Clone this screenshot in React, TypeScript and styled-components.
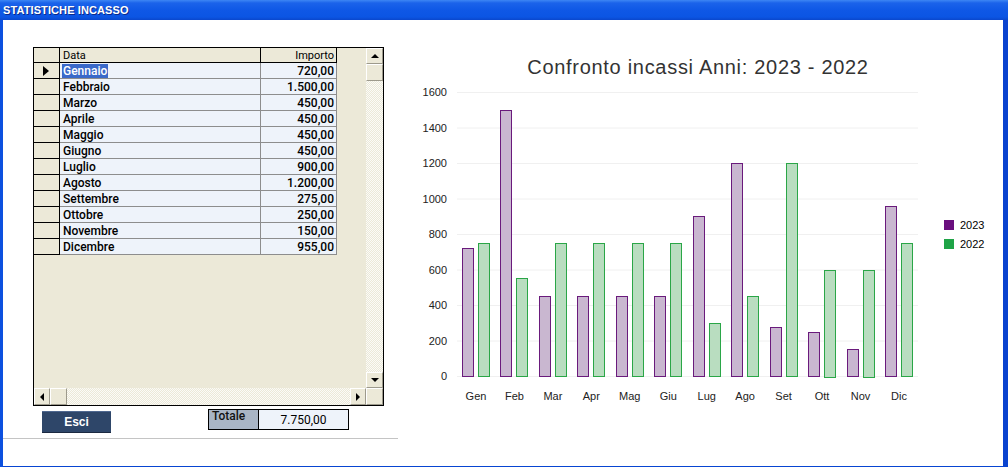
import styled, { createGlobalStyle, css } from "styled-components";

const GlobalStyle = createGlobalStyle`
  html, body { margin: 0; padding: 0; background: #fff; }
  body { font-family: "Liberation Sans", Arial, sans-serif; }
`;

const Window = styled.div`
  width: 1008px;
  height: 467px;
  display: flex;
  flex-direction: column;
  background: #fff;
  overflow: hidden;
`;

const TitleBar = styled.div`
  height: 20px;
  flex: none;
  padding-left: 3px;
  display: flex;
  align-items: center;
  color: #fff;
  font-size: 11px;
  font-weight: 700;
  letter-spacing: 0.1px;
  text-shadow: 1px 1px 0 #0b2a8a;
  background: linear-gradient(to bottom, #3d86f4 0%, #1b63ea 15%, #0f58e6 50%, #0b55e3 85%, #0a47cc 100%);
`;

const Frame = styled.div`
  flex: 1;
  display: flex;
  border-left: 3px solid #0c50df;
  border-right: 5px solid #0a43cf;
  border-bottom: 5px solid #0845d2;
`;

const LeftPanel = styled.div`
  width: 397px;
  flex: none;
  display: flex;
  flex-direction: column;
  padding-top: 27px;
  box-sizing: border-box;
`;

const GridBox = styled.div`
  margin-left: 30px;
  width: 351px;
  height: 359px;
  box-sizing: border-box;
  border: 1px solid #000;
  background: #ece9d8;
  display: flex;
  flex-direction: column;
`;

const GridTop = styled.div`
  flex: 1;
  display: flex;
`;

const GridBottom = styled.div`
  height: 17px;
  display: flex;
`;

const TableArea = styled.div`
  flex: 1;
  display: grid;
  grid-template-columns: 26px 201px 76px;
  grid-template-rows: 15px;
  grid-auto-rows: 16px;
  align-content: start;
`;

const Cell = styled.div<{ $head?: boolean; $ind?: boolean; $right?: boolean; $last?: boolean }>`
  box-sizing: border-box;
  display: flex;
  align-items: center;
  padding: 0 2px 0 3px;
  font-family: Roboto, "Liberation Sans", Arial, sans-serif;
  font-size: 12px;
  font-weight: 500;
  color: #000;
  white-space: nowrap;
  background: #eef3fa;
  border-right: 1px solid #8d8d8d;
  border-bottom: 1px solid #8d8d8d;
  ${(p) => p.$right && css`justify-content: flex-end;`}
  ${(p) =>
    (p.$head || p.$ind) &&
    css`
      background: #ece9d8;
      border-right-color: #000;
      border-bottom-color: #000;
    `}
  ${(p) =>
    p.$head &&
    css`
      font-size: 11px;
      font-weight: 400;
    `}
  ${(p) => p.$ind && css`justify-content: center; padding: 0;`}
  ${(p) => p.$last && css`border-right-color: #000;`}
`;

const Row = styled.div`
  display: contents;
`;

const Pointer = styled.span`
  width: 0;
  height: 0;
  margin-left: -2px;
  border-left: 6px solid #000;
  border-top: 5px solid transparent;
  border-bottom: 5px solid transparent;
`;

const Selected = styled.span`
  background: #3a69c9;
  color: #fff;
  padding: 0 1px;
  margin-left: -1px;
  line-height: 14px;
`;

const Track = styled.div<{ $vertical?: boolean }>`
  ${(p) => (p.$vertical ? css`width: 17px; flex-direction: column;` : css`flex: 1;`)}
  display: flex;
  background: repeating-conic-gradient(#ece9d8 0% 25%, #fbfbf8 0% 50%) 0 0 / 2px 2px;
`;

const ScrollBtn = styled.div<{ $w?: number; $h?: number }>`
  width: ${(p) => p.$w ?? 17}px;
  height: ${(p) => p.$h ?? 16}px;
  flex: none;
  box-sizing: border-box;
  background: #ece9d8;
  border-top: 1px solid #fff;
  border-left: 1px solid #fff;
  border-right: 1px solid #9d9a8c;
  border-bottom: 1px solid #9d9a8c;
  display: flex;
  align-items: center;
  justify-content: center;
`;

const Spacer = styled.div`
  flex: 1;
`;

const Arrow = styled.span<{ $dir: "up" | "down" | "left" | "right" }>`
  width: 0;
  height: 0;
  ${(p) =>
    p.$dir === "up"
      ? css`border-bottom: 4px solid #000; border-left: 4px solid transparent; border-right: 4px solid transparent;`
      : p.$dir === "down"
      ? css`border-top: 4px solid #000; border-left: 4px solid transparent; border-right: 4px solid transparent;`
      : p.$dir === "left"
      ? css`border-right: 4px solid #000; border-top: 4px solid transparent; border-bottom: 4px solid transparent;`
      : css`border-left: 4px solid #000; border-top: 4px solid transparent; border-bottom: 4px solid transparent;`}
`;

const Footer = styled.div`
  display: flex;
  align-items: flex-start;
  padding-left: 39px;
  margin-top: 3px;
  height: 24px;
`;

const ExitButton = styled.button`
  margin-top: 2px;
  width: 69px;
  height: 22px;
  border: 0;
  border-top: 1px solid #4f6890;
  border-bottom: 1px solid #1b2940;
  background: #2e4669;
  color: #fff;
  font-family: "Liberation Sans", Arial, sans-serif;
  font-size: 12px;
  font-weight: 700;
  cursor: pointer;
`;

const TotalBox = styled.div`
  margin-left: 97px;
  width: 141px;
  height: 21px;
  box-sizing: border-box;
  border: 1px solid #000;
  display: flex;
`;

const TotalLabel = styled.div`
  width: 50px;
  box-sizing: border-box;
  border-right: 1px solid #000;
  background: #a9b5c5;
  font-family: Roboto, "Liberation Sans", Arial, sans-serif;
  font-size: 12px;
  font-weight: 500;
  color: #111;
  padding: 0 0 0 3px;
  line-height: 13px;
`;

const TotalValue = styled.div`
  flex: 1;
  background: #eef3fa;
  display: flex;
  align-items: center;
  justify-content: center;
  font-family: Roboto, "Liberation Sans", Arial, sans-serif;
  font-size: 12px;
  color: #000;
`;

const Rule = styled.div`
  margin-top: 5px;
  margin-right: 2px;
  border-top: 1px solid #c4c4c4;
`;

const ChartPanel = styled.div`
  flex: 1;
`;

const months: [string, string][] = [
  ["Gennaio", "720,00"],
  ["Febbraio", "1.500,00"],
  ["Marzo", "450,00"],
  ["Aprile", "450,00"],
  ["Maggio", "450,00"],
  ["Giugno", "450,00"],
  ["Luglio", "900,00"],
  ["Agosto", "1.200,00"],
  ["Settembre", "275,00"],
  ["Ottobre", "250,00"],
  ["Novembre", "150,00"],
  ["Dicembre", "955,00"],
];

const labels = ["Gen", "Feb", "Mar", "Apr", "Mag", "Giu", "Lug", "Ago", "Set", "Ott", "Nov", "Dic"];
const y2023 = [720, 1500, 450, 450, 450, 450, 900, 1200, 275, 250, 150, 955];
const y2022 = [750, 550, 750, 750, 750, 750, 300, 450, 1200, 600, 600, 750];
const ticks = [0, 200, 400, 600, 800, 1000, 1200, 1400, 1600];

const base = 356;
const k = 0.1775;
const step = 38.45;

function Chart() {
  return (
    <svg width="603" height="442" viewBox="0 0 603 442" fontFamily="'Liberation Sans', Arial, sans-serif">
      <text x="298" y="54" textAnchor="middle" fontSize="20" letterSpacing="0.7" fill="#333">
        Confronto incassi Anni: 2023 - 2022
      </text>
      {ticks.map((t) => (
        <g key={t}>
          <line x1="57" x2="518" y1={base - t * k + 0.5} y2={base - t * k + 0.5} stroke="#f0f0f0" />
          <text x="47" y={base - t * k + 4} textAnchor="end" fontSize="11" fill="#222">
            {t}
          </text>
        </g>
      ))}
      {labels.map((l, i) => (
        <g key={l}>
          <rect
            x={Math.round(62 + i * step) + 0.5}
            y={Math.round(base - y2023[i] * k) + 0.5}
            width="11"
            height={Math.round(y2023[i] * k)}
            fill="#c9b7d0"
            stroke="#6a1a7c"
          />
          <rect
            x={Math.round(78 + i * step) + 0.5}
            y={Math.round(base - y2022[i] * k) + 0.5}
            width="11"
            height={Math.round(y2022[i] * k)}
            fill="#b9ddc0"
            stroke="#2aa647"
          />
          <text x={76 + i * step} y="380" textAnchor="middle" fontSize="11" fill="#222">
            {l}
          </text>
        </g>
      ))}
      <rect x="544" y="200" width="10" height="10" fill="#6a0f7e" />
      <text x="560" y="209" fontSize="11" fill="#000">2023</text>
      <rect x="544" y="219" width="10" height="10" fill="#1fa447" />
      <text x="560" y="228" fontSize="11" fill="#000">2022</text>
    </svg>
  );
}

export default function App() {
  return (
    <>
      <GlobalStyle />
      <Window>
        <TitleBar>STATISTICHE INCASSO</TitleBar>
        <Frame>
          <LeftPanel>
            <GridBox>
              <GridTop>
                <TableArea>
                  <Row>
                    <Cell $head $ind />
                    <Cell $head>Data</Cell>
                    <Cell $head $right $last>Importo</Cell>
                  </Row>
                  {months.map(([m, v], i) => (
                    <Row key={m}>
                      <Cell $ind>{i === 0 && <Pointer />}</Cell>
                      <Cell>{i === 0 ? <Selected>{m}</Selected> : m}</Cell>
                      <Cell $right>{v}</Cell>
                    </Row>
                  ))}
                </TableArea>
                <Track $vertical>
                  <ScrollBtn $h={16}>
                    <Arrow $dir="up" />
                  </ScrollBtn>
                  <ScrollBtn $h={17} />
                  <Spacer />
                  <ScrollBtn $h={16}>
                    <Arrow $dir="down" />
                  </ScrollBtn>
                </Track>
              </GridTop>
              <GridBottom>
                <Track>
                  <ScrollBtn $w={16} $h={17}>
                    <Arrow $dir="left" />
                  </ScrollBtn>
                  <ScrollBtn $w={17} $h={17} />
                  <Spacer />
                  <ScrollBtn $w={16} $h={17}>
                    <Arrow $dir="right" />
                  </ScrollBtn>
                </Track>
                <ScrollBtn $w={17} $h={17} />
              </GridBottom>
            </GridBox>
            <Footer>
              <ExitButton>Esci</ExitButton>
              <TotalBox>
                <TotalLabel>Totale</TotalLabel>
                <TotalValue>7.750,00</TotalValue>
              </TotalBox>
            </Footer>
            <Rule />
          </LeftPanel>
          <ChartPanel>
            <Chart />
          </ChartPanel>
        </Frame>
      </Window>
    </>
  );
}
